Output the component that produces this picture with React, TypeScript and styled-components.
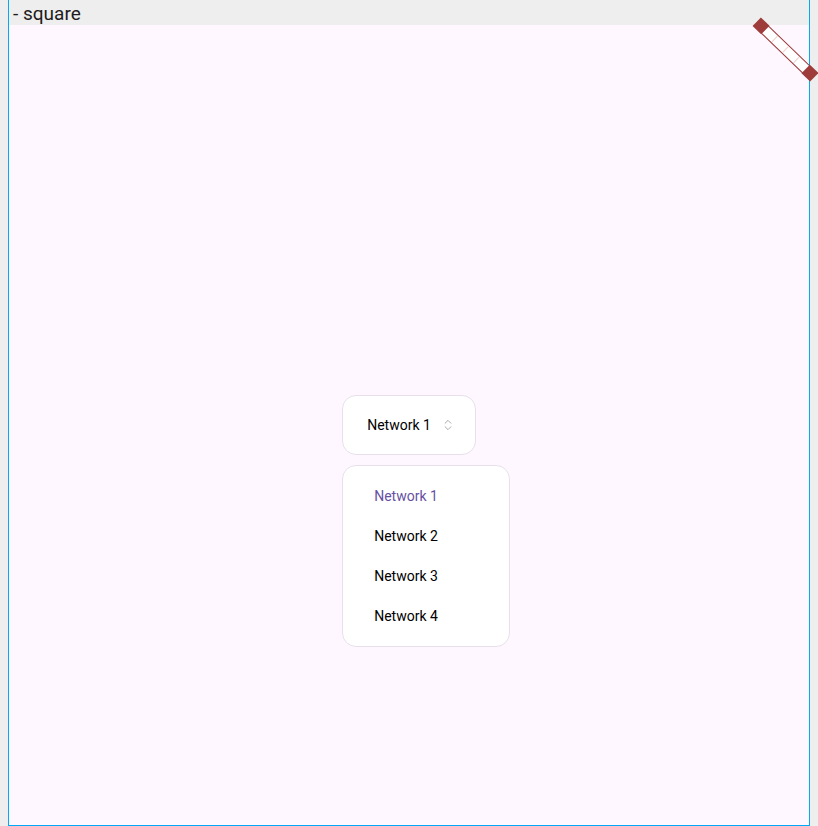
import styled, { createGlobalStyle } from "styled-components";
import { ChevronsUpDown } from "lucide-react";

const GlobalStyle = createGlobalStyle`
    html, body {
        margin: 0;
        padding: 0;
        background: #eeeeee;
        font-family: Roboto, "Liberation Sans", sans-serif;
    }
    body {
        padding-left: 8px;
    }
`;

const Frame = styled.div`
    width: 800px;
    height: 825px;
    border: 1px solid #03a9f4;
    border-top: none;
    display: flex;
    flex-direction: column;
    background: #fef7ff;
`;

const TitleBar = styled.div`
    height: 25px;
    box-sizing: border-box;
    background: #eeeeee;
    padding: 3px 0 0 4px;
    font-size: 19px;
    line-height: 22px;
    color: #1d1b20;
    overflow: hidden;
`;

const Stage = styled.div`
    flex: 1;
    display: flex;
    align-items: center;
    justify-content: center;
`;

const SelectWrap = styled.div`
    position: relative;
`;

const Trigger = styled.button`
    height: 60px;
    display: flex;
    align-items: center;
    gap: 10px;
    padding: 0 20px 0 24px;
    border: 1px solid #e7e0ec;
    border-radius: 14px;
    background: #ffffff;
    font-family: inherit;
    font-size: 14px;
    color: #000000;
    cursor: pointer;
`;

const Chevrons = styled(ChevronsUpDown)`
    color: #9e9e9e;
`;

const Menu = styled.ul`
    position: absolute;
    top: 70px;
    left: 0;
    width: 166px;
    margin: 0;
    padding: 10px 0;
    list-style: none;
    background: #ffffff;
    border: 1px solid #e7e0ec;
    border-radius: 14px;
`;

const Option = styled.li<{ $selected?: boolean }>`
    height: 40px;
    display: flex;
    align-items: center;
    padding-left: 31px;
    font-size: 14px;
    color: ${(p) => (p.$selected ? "#6750a4" : "#000000")};
`;

const Ribbon = styled.svg`
    position: absolute;
    top: 0;
    left: 740px;
`;

const options = ["Network 1", "Network 2", "Network 3", "Network 4"];

export default function App() {
    return (
        <>
            <GlobalStyle />
            <Frame>
                <TitleBar>- square</TitleBar>
                <Stage>
                    <SelectWrap>
                        <Trigger>
                            Network 1
                            <Chevrons size={14} strokeWidth={1.5} />
                        </Trigger>
                        <Menu>
                            {options.map((o, i) => (
                                <Option key={o} $selected={i === 0}>
                                    {o}
                                </Option>
                            ))}
                        </Menu>
                    </SelectWrap>
                </Stage>
            </Frame>
            <Ribbon width="78" height="90" viewBox="740 0 78 90">
                <g transform="translate(785.5 49.5) rotate(44)">
                    <rect x="-33" y="-5" width="66" height="10" fill="#ffffff" stroke="#9e3b3b" strokeWidth="1" />
                    <line x1="-15" y1="-4" x2="-15" y2="4" stroke="#f0d0d0" strokeWidth="1" />
                    <line x1="0" y1="-4" x2="0" y2="4" stroke="#f0d0d0" strokeWidth="1" />
                    <line x1="15" y1="-4" x2="15" y2="4" stroke="#f0d0d0" strokeWidth="1" />
                    <rect x="-40" y="-6" width="12" height="12" fill="#9e3b3b" />
                    <rect x="28" y="-6" width="12" height="12" fill="#9e3b3b" />
                </g>
            </Ribbon>
        </>
    );
}
